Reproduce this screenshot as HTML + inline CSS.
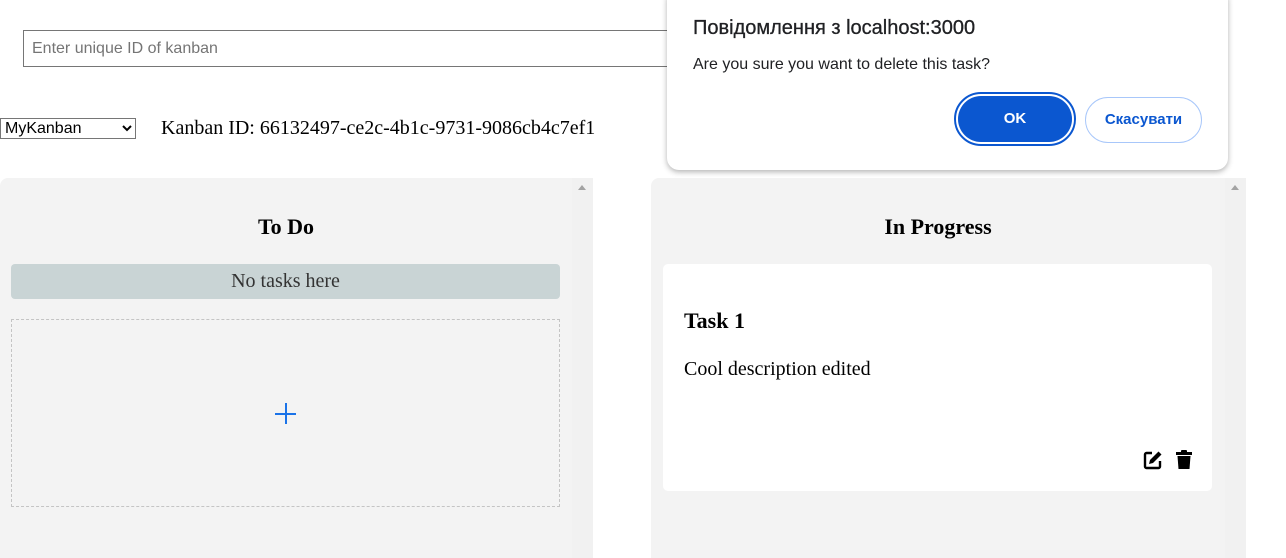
<!DOCTYPE html>
<html><head><meta charset="utf-8"><style>
body{margin:0;width:1286px;height:533px;overflow:hidden;background:#fff;font-family:"Liberation Serif",serif;position:relative}
.abs{position:absolute}
input{position:absolute;left:23px;top:30px;width:1200px;height:37px;box-sizing:border-box;border:1px solid #767676;font:16px "Liberation Sans",sans-serif;padding:0 8px;color:#757575}
select{position:absolute;left:0;top:118px;width:136px;height:21px;font:16px "Liberation Sans",sans-serif;border:1px solid #767676;background:#fff;padding:0}
.panel{position:absolute;top:178px;height:380px;background:#f3f3f3;border-radius:8px 0 0 0}
.sb{position:absolute;top:178px;width:21px;height:380px;background:#f1f1f1}
.tri{position:absolute;width:0;height:0;border-left:4px solid transparent;border-right:4px solid transparent;border-bottom:5px solid #a3a3a3}
h3{margin:0;font-size:22px;font-weight:bold;position:absolute;text-align:center}
.dlg{position:absolute;left:667px;top:-12px;width:561px;height:182px;background:#fff;border-radius:12px;box-shadow:0 2px 6px rgba(0,0,0,.3);font-family:"Liberation Sans",sans-serif}
</style></head><body>
<input placeholder="Enter unique ID of kanban">
<select><option>MyKanban</option></select>
<div class="abs" style="left:161px;top:117px;font-size:20px">Kanban ID: 66132497-ce2c-4b1c-9731-9086cb4c7ef1</div>

<div class="panel" style="left:0;width:572px"></div>
<div class="sb" style="left:572px"></div><div class="tri" style="left:578px;top:185px"></div>
<h3 style="left:0;width:572px;top:214px">To Do</h3>
<div class="abs" style="left:11px;top:264px;width:549px;height:35px;background:#c9d4d5;border-radius:4px;text-align:center;line-height:35px;font-size:20px;color:#333">No tasks here</div>
<div class="abs" style="left:11px;top:319px;width:547px;height:186px;border:1px dashed #c4c4c4"></div>
<div class="abs" style="left:275px;top:413px;width:21px;height:1.5px;background:#1a73e8"></div>
<div class="abs" style="left:285px;top:403px;width:1.5px;height:21px;background:#1a73e8"></div>

<div class="panel" style="left:651px;width:574px"></div>
<div class="sb" style="left:1225px"></div><div class="tri" style="left:1231px;top:185px"></div>
<h3 style="left:651px;width:574px;top:214px">In Progress</h3>
<div class="abs" style="left:663px;top:264px;width:549px;height:227px;background:#fff;border-radius:5px"></div>
<div class="abs" style="left:684px;top:308px;font-size:22px;font-weight:bold">Task 1</div>
<div class="abs" style="left:684px;top:358px;font-size:20px">Cool description edited</div>
<svg class="abs" style="left:1143px;top:450px" width="20" height="20" viewBox="0 0 20 20"><path d="M9 3H3.5A1.5 1.5 0 0 0 2 4.5v12A1.5 1.5 0 0 0 3.5 18h12a1.5 1.5 0 0 0 1.5-1.5V11" fill="none" stroke="#000" stroke-width="2.4"/><path d="M15.5 1.5l3 3L10 13l-4 1 1-4z" fill="#000"/></svg>
<svg class="abs" style="left:1175px;top:450px" width="18" height="20" viewBox="0 0 18 20"><rect x="1" y="2" width="16" height="3" fill="#000"/><rect x="6" y="0" width="6" height="3" rx="1" fill="#000"/><path d="M2.5 6h13l-1 13H3.5z" fill="#000"/></svg>

<div class="dlg">
<div class="abs" style="left:26px;top:29px;font-size:20px;color:#202124;-webkit-text-stroke:0.3px #202124">Повідомлення з localhost:3000</div>
<div class="abs" style="left:26px;top:68px;font-size:16px;color:#202124">Are you sure you want to delete this task?</div>
<div class="abs" style="left:287px;top:104px;width:118px;height:50px;border:2px solid #0b57d0;border-radius:27px;"></div>
<div class="abs" style="left:291px;top:108px;width:114px;height:46px;background:#0b57d0;border-radius:24px;color:#fff;font-weight:bold;font-size:15px;text-align:center;line-height:46px">OK</div>
<div class="abs" style="left:418px;top:109px;width:115px;height:44px;border:1px solid #a8c7fa;border-radius:23px;color:#0b57d0;font-weight:bold;font-size:15px;text-align:center;line-height:44px">Скасувати</div>
</div>
</body></html>
